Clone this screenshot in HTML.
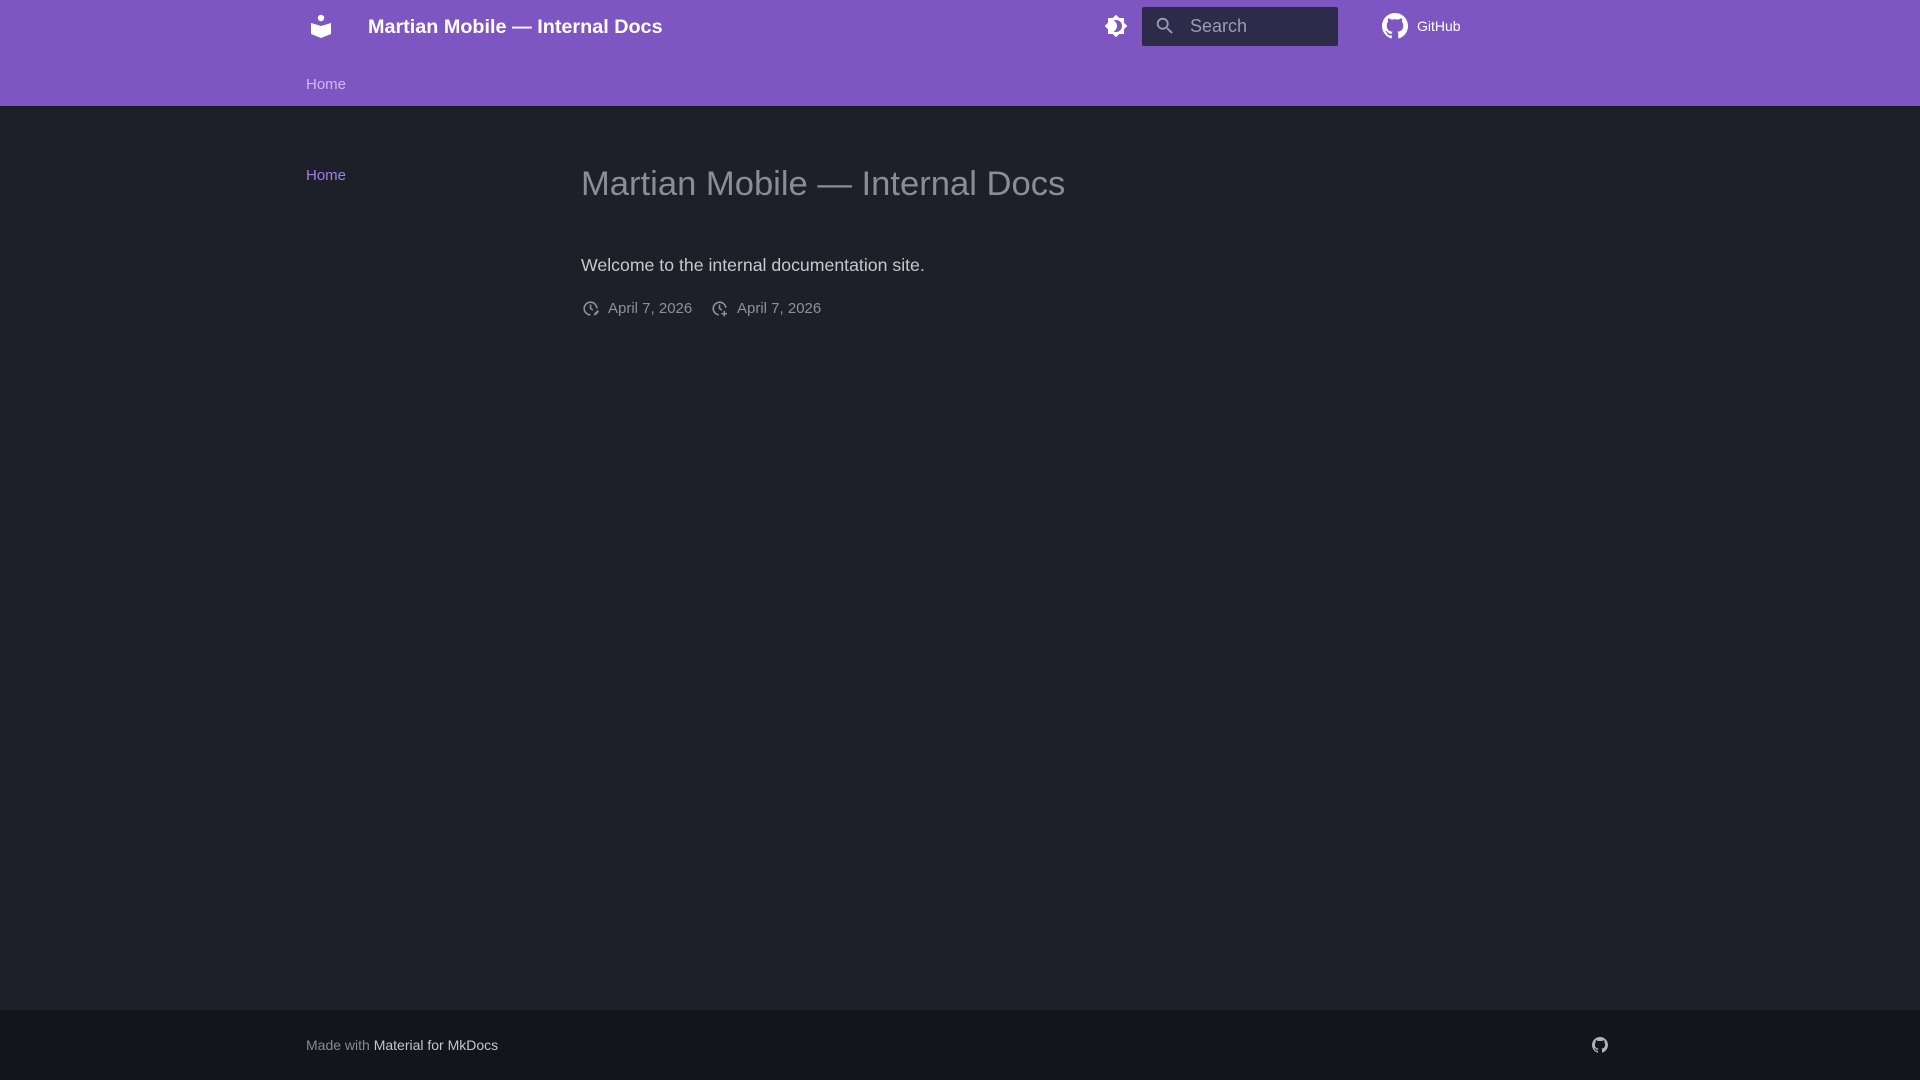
<!DOCTYPE html>
<html><head><meta charset="utf-8"><style>
*{margin:0;padding:0;box-sizing:border-box}
body{width:1920px;height:1080px;background:#1e2029;font-family:"Liberation Sans",sans-serif;position:relative;overflow:hidden}
.hdr{position:absolute;left:0;top:0;width:1920px;height:106px;background:#7e56c2;box-shadow:0 0 4px rgba(0,0,0,.3)}
.abs{position:absolute;white-space:nowrap}
.title{left:368px;top:15px;font-size:19.8px;font-weight:bold;color:#fff;line-height:24px}
.search{left:1142px;top:7px;width:196px;height:39px;background:#2e2a4a;border-radius:2px}
.search span{position:absolute;left:48px;top:9px;font-size:18px;color:#9e9bb0}
.gh{left:1417px;top:18px;font-size:14px;color:#fff}
.tab{left:306px;top:76px;font-size:15px;color:rgba(255,255,255,.6)}
.side{left:306px;top:167px;font-size:15px;color:#a27fe0}
h1{position:absolute;left:581px;top:165px;font-size:34.6px;font-weight:normal;color:#8a8d96;white-space:nowrap}
.p{left:581px;top:255px;font-size:17.7px;color:#c6c8ce}
.d{top:300px;font-size:15px;color:#8e9099}
.foot{position:absolute;left:0;top:1010px;width:1920px;height:70px;background:#14151a}
.ft{left:306px;top:1037px;font-size:14px;color:#888a92}
.ft b{font-weight:normal;color:#c4c6cc}
</style></head><body>
<div class="hdr"></div>
<svg class="abs" style="left:308px;top:13px" width="26" height="26" viewBox="0 0 26 26"><circle cx="13" cy="5" r="3.2" fill="#fff"/><path d="M3 10 L13 13 L23 10 L23 21 L13 25 L3 21Z" fill="#fff"/></svg>
<div class="abs title">Martian Mobile — Internal Docs</div>
<svg class="abs" style="left:1104px;top:14px" width="24" height="24" viewBox="0 0 24 24"><path fill="#fff" d="M12 18c-.89 0-1.74-.2-2.5-.55C11.56 16.5 13 14.42 13 12s-1.44-4.5-3.5-5.45C10.26 6.2 11.11 6 12 6a6 6 0 0 1 6 6 6 6 0 0 1-6 6m8-9.31V4h-4.69L12 .69 8.69 4H4v4.69L.69 12 4 15.31V20h4.69L12 23.31 15.31 20H20v-4.69L23.31 12 20 8.69z"/></svg>
<div class="abs search"><svg style="position:absolute;left:12px;top:8px" width="22" height="22" viewBox="0 0 24 24"><path fill="#9e9bb0" d="M9.5 3A6.5 6.5 0 0 1 16 9.5c0 1.61-.59 3.09-1.56 4.23l.27.27h.79l5 5-1.5 1.5-5-5v-.79l-.27-.27A6.52 6.52 0 0 1 9.5 16 6.5 6.5 0 0 1 3 9.5 6.5 6.5 0 0 1 9.5 3m0 2C7 5 5 7 5 9.5S7 14 9.5 14 14 12 14 9.5 12 5 9.5 5z"/></svg><span>Search</span></div>
<svg class="abs" style="left:1382px;top:13px" width="26" height="26" viewBox="0 0 16 16"><path fill="#fff" d="M8 0C3.58 0 0 3.58 0 8c0 3.54 2.29 6.53 5.47 7.59.4.07.55-.17.55-.38 0-.19-.01-.82-.01-1.49-2.01.37-2.53-.49-2.69-.94-.09-.23-.48-.94-.82-1.13-.28-.15-.68-.52-.01-.53.63-.01 1.08.58 1.23.82.72 1.21 1.87.87 2.33.66.07-.52.28-.87.51-1.07-1.78-.2-3.64-.89-3.64-3.95 0-.87.31-1.59.82-2.15-.08-.2-.36-1.02.08-2.12 0 0 .67-.21 2.2.82.64-.18 1.32-.27 2-.27.68 0 1.36.09 2 .27 1.53-1.04 2.2-.82 2.2-.82.44 1.1.16 1.92.08 2.12.51.56.82 1.27.82 2.15 0 3.07-1.87 3.75-3.65 3.95.29.25.54.73.54 1.48 0 1.07-.01 1.93-.01 2.2 0 .21.15.46.55.38A8.013 8.013 0 0 0 16 8c0-4.42-3.58-8-8-8z"/></svg>
<div class="abs gh">GitHub</div>
<div class="abs tab">Home</div>
<div class="abs side">Home</div>
<h1>Martian Mobile — Internal Docs</h1>
<div class="abs p">Welcome to the internal documentation site.</div>
<svg class="abs" style="left:581px;top:299px" width="19" height="19" viewBox="0 0 24 24"><path fill="none" stroke="#8e9099" stroke-width="2" d="M20 12a8 8 0 1 0-8 8M12 7v5l3 2"/><path fill="#8e9099" d="M16 21l1-3 4-4 2 2-4 4z"/></svg>
<div class="abs d" style="left:608px">April 7, 2026</div>
<svg class="abs" style="left:710px;top:299px" width="19" height="19" viewBox="0 0 24 24"><path fill="none" stroke="#8e9099" stroke-width="2" d="M20 11a8 8 0 1 0-9 9M12 7v5l3 2M18 15v7M14.5 18.5h7"/></svg>
<div class="abs d" style="left:737px">April 7, 2026</div>
<div class="foot"></div>
<div class="abs ft">Made with <b>Material for MkDocs</b></div>
<svg class="abs" style="left:1592px;top:1037px" width="16" height="16" viewBox="0 0 16 16"><path fill="#b0b2b8" d="M8 0C3.58 0 0 3.58 0 8c0 3.54 2.29 6.53 5.47 7.59.4.07.55-.17.55-.38 0-.19-.01-.82-.01-1.49-2.01.37-2.53-.49-2.69-.94-.09-.23-.48-.94-.82-1.13-.28-.15-.68-.52-.01-.53.63-.01 1.08.58 1.23.82.72 1.21 1.87.87 2.33.66.07-.52.28-.87.51-1.07-1.78-.2-3.64-.89-3.64-3.95 0-.87.31-1.59.82-2.15-.08-.2-.36-1.02.08-2.12 0 0 .67-.21 2.2.82.64-.18 1.32-.27 2-.27.68 0 1.36.09 2 .27 1.53-1.04 2.2-.82 2.2-.82.44 1.1.16 1.920.08 2.12.51.56.82 1.27.82 2.15 0 3.07-1.87 3.75-3.65 3.95.29.25.54.73.54 1.48 0 1.07-.01 1.93-.01 2.2 0 .21.15.46.55.38A8.013 8.013 0 0 0 16 8c0-4.42-3.58-8-8-8z"/></svg>
</body></html>
